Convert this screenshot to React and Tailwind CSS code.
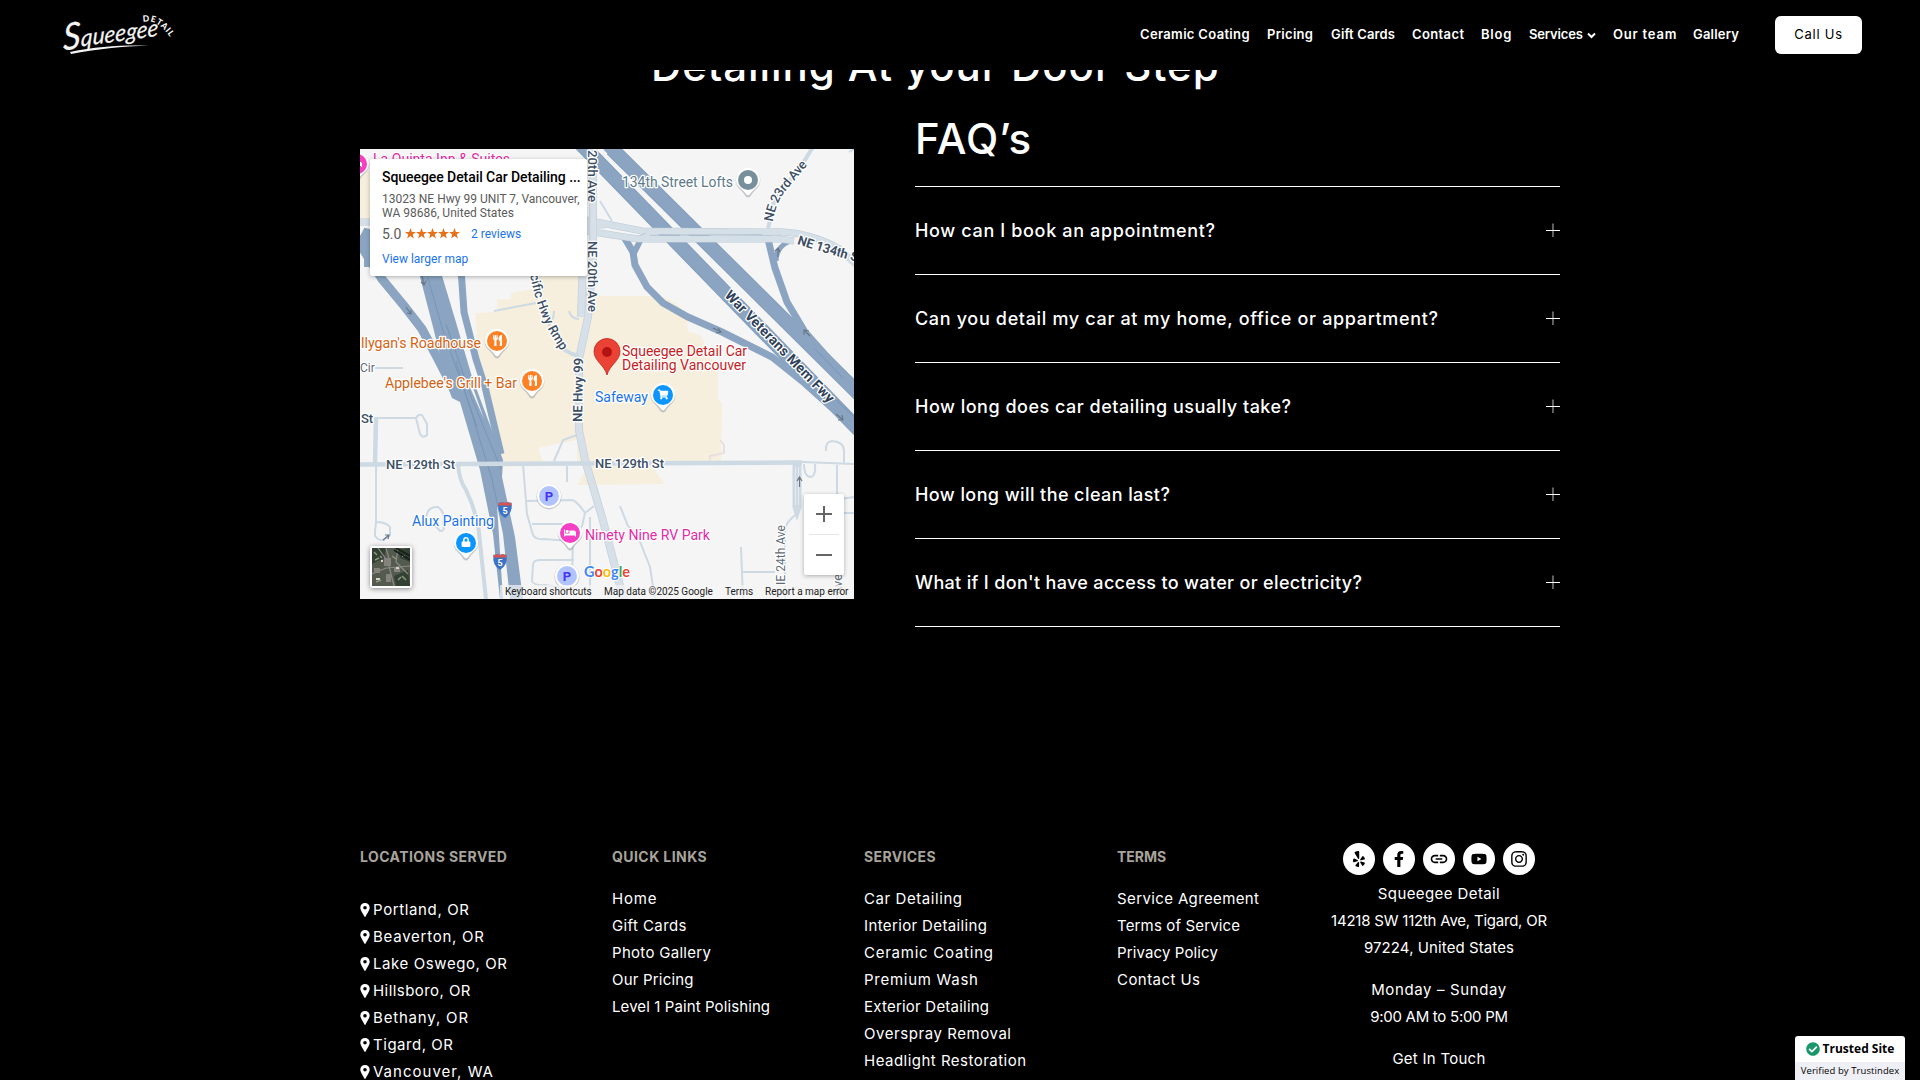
import { FaCheckCircle, FaFacebookF, FaInstagram, FaShoppingCart, FaUtensils, FaYelp, FaYoutube, FaBed, FaLock } from "react-icons/fa";
import { MdLink } from "react-icons/md";

const NAV = [
  { label: "Ceramic Coating", cls: "w-[110px] tracking-[0.33px]" },
  { label: "Pricing", cls: "w-[47px] tracking-[0.31px]" },
  { label: "Gift Cards", cls: "w-[64px] tracking-[0.14px]" },
  { label: "Contact", cls: "w-[52px] tracking-[0.38px]" },
  { label: "Blog", cls: "w-[31px] tracking-[0.8px]" },
  { label: "Services", cls: "w-[67px] tracking-[-0.14px]", menu: true },
  { label: "Our team", cls: "w-[63px] tracking-[0.8px]" },
  { label: "Gallery", cls: "w-[46px] tracking-[0.21px]" },
];

const FAQS = [
  { text: "How can I book an appointment?", cls: "tracking-[0.65px]" },
  { text: "Can you detail my car at my home, office or appartment?", cls: "tracking-[0.66px]" },
  { text: "How long does car detailing usually take?", cls: "tracking-[0.5px]" },
  { text: "How long will the clean last?", cls: "tracking-[0.42px]" },
  { text: "What if I don't have access to water or electricity?", cls: "tracking-[0.335px]" },
];

const LOCATIONS = [
  { text: "Portland, OR", cls: "tracking-[0.63px]" },
  { text: "Beaverton, OR", cls: "tracking-[0.75px]" },
  { text: "Lake Oswego, OR", cls: "tracking-[0.59px]" },
  { text: "Hillsboro, OR", cls: "tracking-[0.44px]" },
  { text: "Bethany, OR", cls: "tracking-[0.82px]" },
  { text: "Tigard, OR", cls: "tracking-[0.53px]" },
  { text: "Vancouver, WA", cls: "tracking-[1.02px]" },
];

const LINKS = [
  { text: "Home", cls: "tracking-[0.82px]" },
  { text: "Gift Cards", cls: "tracking-[0.4px]" },
  { text: "Photo Gallery", cls: "tracking-[0.3px]" },
  { text: "Our Pricing", cls: "tracking-[0.19px]" },
  { text: "Level 1 Paint Polishing", cls: "tracking-[0.1px]" },
];

const SERVICES = [
  { text: "Car Detailing", cls: "tracking-[0.57px]" },
  { text: "Interior Detailing", cls: "tracking-[0.37px]" },
  { text: "Ceramic Coating", cls: "tracking-[0.75px]" },
  { text: "Premium Wash", cls: "tracking-[0.73px]" },
  { text: "Exterior Detailing", cls: "tracking-[0.22px]" },
  { text: "Overspray Removal", cls: "tracking-[0.56px]" },
  { text: "Headlight Restoration", cls: "tracking-[0.48px]" },
];

const TERMS = [
  { text: "Service Agreement", cls: "tracking-[0.38px]" },
  { text: "Terms of Service", cls: "tracking-[0.15px]" },
  { text: "Privacy Policy", cls: "tracking-[0.13px]" },
  { text: "Contact Us", cls: "tracking-[0.44px]" },
];

const SOCIALS = [
  { name: "Yelp", Icon: FaYelp, size: 16 },
  { name: "Facebook", Icon: FaFacebookF, size: 16 },
  { name: "Website", Icon: MdLink, size: 20 },
  { name: "YouTube", Icon: FaYoutube, size: 16 },
  { name: "Instagram", Icon: FaInstagram, size: 18 },
];

function Logo() {
  return (
    <svg width="124" height="56" viewBox="0 0 124 56" className="ml-[56px]" aria-label="Squeegee Detail">
      <defs>
        <path id="logo-arc" d="M87 15 Q102 11 115 32" />
      </defs>
      <g fill="#f4f4f4" stroke="#f4f4f4" strokeWidth=".2" fontFamily="Lato" fontStyle="italic" transform="translate(7 43.500) rotate(-8)">
        <text x="0" y="0" fontSize="37" textLength="18" lengthAdjust="spacingAndGlyphs" transform="skewX(-8)">S</text>
        <text x="18" y="-1.500" fontSize="23" textLength="78" lengthAdjust="spacingAndGlyphs" transform="skewX(-10)">queegee</text>
      </g>
      <path d="M14 45 C40 39 66 38 93 38.500 C66 39.500 40 42 15 47 Z" fill="#f4f4f4" />
      <text fontFamily="Lato" fontWeight="900" fontSize="8.500" fill="#f4f4f4">
        <textPath href="#logo-arc" textLength="33">DETAIL</textPath>
      </text>
    </svg>
  );
}

function Header() {
  return (
    <header className="relative z-10 flex h-[70px] items-start bg-black">
      <div className="pt-[7px]"><Logo /></div>
      <nav className="mt-[25px] ml-[960px] flex h-[20px] items-center gap-[17px] text-[13px] font-semibold whitespace-nowrap">
        {NAV.map(({ label, cls, menu }) => (
          <a key={label} className={`flex items-center ${cls}`}>
            {label}
            {menu && (
              <svg width="9" height="7" viewBox="0 0 9 7" fill="none" stroke="currentColor" strokeWidth="2" className="ml-[4px]">
                <path d="M1 1.500 L4.500 5 L8 1.500" />
              </svg>
            )}
          </a>
        ))}
      </nav>
      <a className="mt-[16px] ml-[36px] flex h-[38px] w-[87px] items-center justify-center rounded-[6px] bg-white text-[13px] tracking-[0.78px] text-black">
        Call Us
      </a>
    </header>
  );
}

function Pin({ x, y, color, children }) {
  return (
    <g transform={`translate(${x} ${y})`}>
      <path d="M-12.300 0.500 A12.300 12.300 0 1 1 12.300 0.500 C12 7 6 9 2.500 15.500 Q0 18 -2.500 15.500 C-6 9 -12 7 -12.300 0.500Z" fill="#8a8f96" opacity=".45" transform="translate(0 .8)" />
      <path d="M-12 0 A12 12 0 1 1 12 0 C12 7 6 8 2 14 Q0 16.500 -2 14 C-6 8 -12 7 -12 0Z" fill="#fff" />
      <circle r="10" fill={color} />
      {children}
    </g>
  );
}

function Parking({ x, y }) {
  return (
    <g transform={`translate(${x} ${y})`}>
      <circle r="12.500" cy=".7" fill="#8a8f96" opacity=".45" />
      <circle r="12" fill="#fff" />
      <circle r="10" fill="#b1c4ff" />
      <text y="4.700" textAnchor="middle" fontSize="13" fontWeight="700" fill="#4733f0">P</text>
    </g>
  );
}

function Shield({ x, y }) {
  return (
    <g transform={`translate(${x} ${y})`}>
      <path d="M-6.500 -7 Q-3 -8.500 0 -7.300 Q3 -8.500 6.500 -7 Q8 3 0 8 Q-8 3 -6.500 -7Z" fill="#3b73c8" />
      <path d="M-6.500 -7.500 L-5 -6.500 L-3 -8 L0 -7 L3 -8 L5 -6.500 L6.500 -7.500 L6.500 -4.500 L-6.500 -4.500Z" fill="#d9544d" />
      <text y="4.300" textAnchor="middle" fontSize="9" fontWeight="700" fill="#fff">5</text>
    </g>
  );
}

function Label({ x, y, len, fill, rotate = 0, size = 14, weight = 400, children }) {
  return (
    <text
      transform={`translate(${x} ${y}) rotate(${rotate})`}
      textLength={len}
      lengthAdjust="spacingAndGlyphs"
      fontSize={size}
      fontWeight={weight}
      fill={fill}
      stroke="#fff"
      strokeWidth="2.500"
      strokeLinejoin="round"
      paintOrder="stroke"
    >
      {children}
    </text>
  );
}

function PathLabel({ id, len, size = 13, weight = 500, fill = "#3c4f66", children }) {
  return (
    <text fontSize={size} fontWeight={weight} fill={fill} stroke="#fff" strokeWidth="2.500" strokeLinejoin="round" paintOrder="stroke">
      <textPath href={`#${id}`} textLength={len}>{children}</textPath>
    </text>
  );
}

function StreetMap() {
  return (
    <svg width="494" height="450" viewBox="0 0 494 450" fontFamily="Roboto" className="block bg-[#f5f5f5]">
      <defs>
        <path id="war-vets" d="M364 147 L474 260" />
        <path id="ne-23rd" d="M413 73 Q415 58 423 45 L449 14" />
        <path id="ne-134th" d="M437 95 Q468 105 515 118" />
        <path id="pacific" d="M170 126 C176 153 182 175 203 204" />
      </defs>

      <path d="M0 22 L10 22 V72 L0 72Z M115 164 L137 163 V150 H151 V144 L172 140 V126 H226 V147 L297 147 Q311 150 319 157 L327 166 L328 183 Q340 183 344 192 L345 203 L358 216 V251 L362 254 L361 312 L143 318 L118 205Z M217 336 L228 317 H292 L305 335Z" fill="#f6efde" />
      <path d="M178 299 L217 291 V312 L183 313Z" fill="#f5f5f5" />

      <g fill="none" stroke="#cdd9e3" strokeWidth="2">
        <path d="M15 269 H56 M56 269 L60 285 Q63 290 67 286 L67 275 L62 266 Q58 265 56 269" />
        <path d="M16 315 V374 L15 382 L15 387 Q19 392 24 391 L30 386 L30 378 Q26 373 16 373" />
        <path d="M66 370 Q67 357 78 358 Q86 364 83 374 Q86 382 80 382 L74 375" />
        <path d="M163 315 L167 365 L173 386 Q176 391 184 390 L209 392 L222 377 L225 364 Q217 352 212 351 L167 352 M172 375 H218 M225 364 L234 357 M207 317 V333 M194 312 L203 291 L217 286 M213 388 L212 430 M172 432 L173 416 Q173 411 180 411 H214 M172 432 Q174 437 185 436 L210 440 M230 368 V450" />
        <path d="M260 357 L268 377 L277 385 L290 418 L295 450 M381 398 L383 450 M383 423 H415" />
        <path d="M442 313 L494 315 M466 302 Q465 293 472 292 Q484 293 484 302 V315 M444 315 Q444 328 451 328 Q456 327 455 315 M477 316 V450 M480 350 L494 348 M480 364 H494" />
        <path d="M438 364 Q425 373 425 382 V450" />
        <path d="M134 162 L176 154 M194 162 Q194 172 188 177 M209 162 Q211 170 219 170 M15 219 H43 M240 52 L252 72 M489 3 L494 0" />
        <path d="M350 311 L350 307 L364 304 V296 L360 291" stroke="#e7dfe0" />
      </g>
      <path d="M16 268 L15 315" stroke="#cdd9e3" strokeWidth="4.500" />
      <path d="M98 315 Q99 331 106 341 L112 355 L118 375 L126 450" fill="none" stroke="#cdd9e3" strokeWidth="4" />
      <path d="M435 314 L435 358 L437 364 L439 358 L439 314" fill="none" stroke="#cdd9e3" strokeWidth="5" />
      <path d="M435.500 318 V356 M438.500 318 V356" stroke="#e4eaf0" strokeWidth="1" />

      <path d="M58 120 L80 120 L95 170 L112 228 L143 311 L142 328 L155 388 L163 450 L140 450 L133 385 L120 321 L100 253 L92 249 L88 238 L73 178Z" fill="#8aa4c1" />
      <g fill="none" stroke="#8aa4c1">
        <path d="M-3 88 L3 100 L22 130 L45 158 L62 180 L77 208 L96 245" strokeWidth="9" />
        <path d="M0 94 L7 80 V118" strokeWidth="6" />
        <path d="M101 120 L104 163 L116 210 L125 238 L141 305" strokeWidth="7" />
      </g>
      <path d="M137 356 L143 450 H150 L143 385Z M109 236 L112 236 L124 270Z" fill="#f5f5f5" />
      <g fill="none" stroke="#6f8fb3" strokeWidth=".7">
        <path d="M66 122 L83 182 L106 246 L132 330 L138 358" />
        <path d="M86 175 L112 250 L141 320 M96 212 L105 243 L117 278" />
      </g>

      <path d="M252 0 L500 246" fill="none" stroke="#7d9abb" strokeWidth="14.500" />
      <path d="M218 -8 L500 282" fill="none" stroke="#7d9abb" strokeWidth="14.500" />
      <path d="M248 -4 L500 246" fill="none" stroke="#8aa4c1" strokeWidth="13" />
      <path d="M218 -8 L500 282" fill="none" stroke="#8aa4c1" strokeWidth="13" />
      <g fill="none" stroke="#8aa4c1" strokeWidth="7">
        <path d="M264 88 L273 103 L275 116 L287 138 L303 154 L328 168 L362 183 L412 208 L442 232 L500 284" />
        <path d="M280 92 L273 106" strokeWidth="6" />
        <path d="M408 90 L415 119 L427 153 L445 183 L485 228" />
        <path d="M430 92 Q416 98 416 112" strokeWidth="5" />
      </g>
      <path d="M457 233 L494 268 M455 200 L482 228" stroke="#6f8fb3" strokeWidth=".7" />

      <g fill="none" stroke="#bccad7" strokeWidth="7">
        <path d="M0 73 H12 M226 76 H245 M226 71 L282 82 L408 83 Q445 81 478 99 L498 117 M226 82 L278 90 H420 L434 92" />
      </g>
      <g fill="none" stroke="#d5dfe7" strokeWidth="6">
        <path d="M0 73 H12 M226 76 H245 M226 71 L282 82 L408 83 Q445 81 478 99 L498 117 M226 82 L278 90 H420 L434 92" />
      </g>
      <path d="M290 86.500 L402 85.500 M279 87 L286 84" stroke="#b3c2d0" strokeWidth=".8" />
      <g fill="none" stroke="#c5d2dd" strokeWidth="8">
        <path d="M233 -2 V110 L228 168 L219 210 V281 L225 311 L242 368 L264 452" />
        <path d="M223 110 L221 168" />
      </g>
      <g fill="none" stroke="#d7e0e8" strokeWidth="6.500">
        <path d="M233 -2 V110 L228 168 L219 210 V281 L225 311 L242 368 L264 452" />
        <path d="M223 110 L221 168" />
      </g>
      <path d="M0 315.500 L222 314.500 L442 313.500" fill="none" stroke="#cdd9e3" strokeWidth="4.500" />
      <path d="M453 -2 L443 14 L414 52 L408 80" fill="none" stroke="#cdd9e3" strokeWidth="4" />
      <path d="M203 200 L212 205 L219 207" fill="none" stroke="#cdd9e3" strokeWidth="4" />

      <g fill="none" stroke="#68788a" strokeWidth="1.200">
        <path d="M62 127 L64 136 M61 133 L64 136 L66 132 M46 158 L51 165 M47 164 L51 165 L51 161" />
        <path d="M353 179 L361 183 M356 184 L361 183 L358 179 M418 108 V99 M415 102 L418 99 L420 103 M450 187 L444 181 M444 186 L444 181 L449 182 M476 265 L483 271 M478 271 L483 271 L482 266" />
        <path d="M439.500 338 V328 M437 332 L439.500 328 L442 332 M23 391 L29 386 M25 386 L29 386 L28 390" />
      </g>

      <Label x={13} y={14.500} len={137} fill="#e52ba8">La Quinta Inn &amp; Suites</Label>
      <Label x={262} y={38} len={111} fill="#5d7987">134th Street Lofts</Label>
      <Label x={1} y={199} len={120} fill="#d56213">llygan's Roadhouse</Label>
      <Label x={25} y={239} len={132} fill="#d56213">Applebee's Grill + Bar</Label>
      <Label x={52} y={377} len={82} fill="#1a73e8">Alux Painting</Label>
      <Label x={225} y={391} len={125} fill="#e52ba8">Ninety Nine RV Park</Label>
      <Label x={235} y={253} len={53} fill="#1a73e8">Safeway</Label>
      <Label x={262} y={207} len={125} fill="#c5221f">Squeegee Detail Car</Label>
      <Label x={262} y={221} len={124} fill="#c5221f">Detailing Vancouver</Label>
      <Label x={26} y={320} len={69} weight={500} size={13} fill="#3c4f66">NE 129th St</Label>
      <Label x={235} y={319} len={69} weight={500} size={13} fill="#3c4f66">NE 129th St</Label>
      <Label x={1} y={274} size={13} weight={500} fill="#3c4f66">St</Label>
      <Label x={0} y={223} size={12} fill="#5f6b78">Cir</Label>
      <Label x={228} y={92} len={71} rotate={90} weight={500} size={13} fill="#3c4f66">NE 20th Ave</Label>
      <Label x={228} y={1} len={52} rotate={90} weight={500} size={13} fill="#3c4f66">20th Ave</Label>
      <Label x={222} y={273} len={64} rotate={-89} weight={600} size={13} fill="#3c4f66">NE Hwy 99</Label>
      <Label x={425} y={436} len={60} rotate={-90} size={12.5} fill="#5f6b78">IE 24th Ave</Label>
      <Label x={482} y={446} len={21} rotate={-90} size={12} fill="#5f6b78">Ave</Label>
      <PathLabel id="war-vets" len={150} size={14} weight={700} fill="#2f4058">War Veterans Mem Fwy</PathLabel>
      <PathLabel id="ne-23rd" len={68}>NE 23rd Ave</PathLabel>
      <PathLabel id="ne-134th" len={67} weight={700}>NE 134th St</PathLabel>
      <PathLabel id="pacific" len={83}>cific Hwy Rmp</PathLabel>

      <Shield x={145} y={361} />
      <Shield x={140} y={413} />
      <Parking x={189} y={347} />
      <Parking x={207} y={427} />
      <Pin x={-3} y={15} color="#f53fc4"><FaBed x="-5" y="-5" size={10} color="#fff" /></Pin>
      <Pin x={137} y={192} color="#ff8126"><FaUtensils x="-5" y="-6" size={11} color="#fff" /></Pin>
      <Pin x={172} y={232} color="#ff8126"><FaUtensils x="-5" y="-6" size={11} color="#fff" /></Pin>
      <Pin x={303} y={246} color="#0b95ff"><FaShoppingCart x="-5.500" y="-6" size={11} color="#fff" /></Pin>
      <Pin x={106} y={394} color="#0b95ff"><FaLock x="-5" y="-6" size={10} color="#fff" /></Pin>
      <Pin x={210} y={384} color="#f53fc4"><FaBed x="-6" y="-6" size={12} color="#fff" /></Pin>
      <Pin x={388} y={31} color="#78909c"><circle r="4" fill="#fff" /></Pin>
      <path d="M247 226 C244.500 216 234 212 234 202.500 A13 13 0 1 1 260 202.500 C260 212 249.500 216 247 226Z" fill="#ea4335" stroke="#c5221f" strokeWidth=".8" />
      <circle cx="247" cy="203" r="5" fill="#b31412" />

      <text x="224" y="428" fontSize="16" fontFamily="Lato" fontWeight="700" textLength="46" lengthAdjust="spacingAndGlyphs" stroke="#fff" strokeWidth="2" paintOrder="stroke">
        <tspan fill="#4285f4">G</tspan><tspan fill="#ea4335">o</tspan><tspan fill="#fbbc05">o</tspan><tspan fill="#4285f4">g</tspan><tspan fill="#34a853">l</tspan><tspan fill="#ea4335">e</tspan>
      </text>
    </svg>
  );
}

function SatelliteThumb() {
  return (
    <svg width="38" height="38" viewBox="0 0 38 38" className="bg-[#555a4f]">
      <path d="M0 0 H14 L12 10 L0 16Z M26 2 L38 0 V14 L28 10Z M22 28 L36 22 L38 38 H24Z" fill="#334034" />
      <path d="M6 0 L16 14 L22 38 M14 0 L18 14 M0 26 L14 20 L38 18 M26 0 L24 14 L36 26" fill="none" stroke="#8b8c86" strokeWidth="1.200" />
      <path d="M12 10 h7 v8 h-7z M22 20 h6 v4 h-6z M2 20 h6 v5 h-6z M14 26 h5 v8 h-5z" fill="#85847c" />
      <path d="M24 19 h3 v2 h-3z M4 30 h4 v2 h-4z M30 7 h3 v2 h-3z M9 12 h2 v2 h-2z" fill="#d6d3c9" />
      <path d="M22 2 L38 12 M24 0 L38 8" stroke="#17211b" strokeWidth="2" />
      <path d="M2 4 l3 3 M8 8 l2 2 M3 12 l4 -2 M30 28 l4 4 M26 32 l3 -3 M4 34 l5 -2 M20 8 l4 3" stroke="#8b9a7e" strokeWidth="1.500" />
    </svg>
  );
}

function MapPanel() {
  return (
    <section className="relative mt-[36px] h-[450px] w-[494px] shrink-0 overflow-hidden font-[Roboto]">
      <StreetMap />
      <div className="absolute top-[10px] left-[10px] h-[117px] w-[217px] rounded-[2px] bg-white pt-[9px] pl-[12px] whitespace-nowrap shadow-[0_1px_4px_rgba(0,0,0,0.3)]">
        <div className="text-[14px] leading-[18px] font-medium tracking-[-0.06px] text-black">Squeegee Detail Car Detailing ...</div>
        <div className="mt-[6px] text-[12px] leading-[14px] tracking-[0.01px] text-[#5b5b5b]">
          13023 NE Hwy 99 UNIT 7, Vancouver,<br />WA 98686, United States
        </div>
        <div className="mt-[6px] flex h-[16px] items-center leading-[16px]">
          <span className="w-[23px] text-[14px] text-[#5b5b5b]">5.0</span>
          <svg width="56" height="11" viewBox="0 0 56 11" fill="#e7711b" className="-mt-[2px]">
            {[0, 11, 22, 33, 44].map((x) => (
              <path key={x} transform={`translate(${x} 0)`} d="M5.500 0 L6.900 3.900 L11 4 L7.700 6.500 L8.900 10.500 L5.500 8.100 L2.100 10.500 L3.300 6.500 L0 4 L4.100 3.900Z" />
            ))}
          </svg>
          <span className="ml-[10px] text-[12px] text-[#1a73e8]">2 reviews</span>
        </div>
        <div className="mt-[10px] text-[12px] leading-[14px] text-[#1a73e8]">View larger map</div>
      </div>
      <div className="absolute top-[345px] left-[444px] flex h-[81px] w-[40px] flex-col items-center rounded-[2px] bg-white shadow-[0_1px_4px_rgba(0,0,0,0.3)]">
        <svg width="40" height="40" viewBox="0 0 40 40" stroke="#666" strokeWidth="2"><path d="M12 20 H28 M20 12 V28" /></svg>
        <div className="h-px w-[30px] bg-[#e6e6e6]" />
        <svg width="40" height="40" viewBox="0 0 40 40" stroke="#666" strokeWidth="2"><path d="M12 20 H28" /></svg>
      </div>
      <div className="absolute top-[397px] left-[10px] rounded-[3px] border-2 border-white shadow-[0_1px_5px_rgba(0,0,0,0.45)]">
        <SatelliteThumb />
      </div>
      <div className="absolute right-0 bottom-0 flex h-[14px] w-[354px] items-center bg-[#f5f5f5]/70 text-[10px] leading-[14px] whitespace-nowrap text-[#222]">
        <span className="ml-[5px] w-[99px]">Keyboard shortcuts</span>
        <span className="w-[121px]">Map data ©2025 Google</span>
        <span className="w-[40px]">Terms</span>
        <span>Report a map error</span>
      </div>
    </section>
  );
}

function PlusIcon() {
  return (
    <svg width="14" height="14" viewBox="0 0 14 14" stroke="#fff" strokeWidth="1" className="-mt-[2px]">
      <path d="M0 7.500 H14" />
      <path d="M7 0.500 V14" opacity=".75" />
    </svg>
  );
}

function Faqs() {
  return (
    <section className="w-[645px]">
      <h2 className="h-[73px] pt-px text-[42px] leading-[50px] font-medium tracking-[0.85px]">FAQ’s</h2>
      <div className="border-t border-white">
        {FAQS.map(({ text, cls }) => (
          <div key={text} className="flex h-[88px] items-center justify-between border-b border-white text-[18px] font-medium">
            <span className={cls}>{text}</span>
            <PlusIcon />
          </div>
        ))}
      </div>
    </section>
  );
}

function LocationPin() {
  return (
    <svg width="10" height="14" viewBox="0 0 10 14" fill="currentColor" className="mr-[3px]">
      <path fillRule="evenodd" d="M5 0 C7.700 0 9.700 2 9.700 4.700 C9.700 7.300 6.500 11 5.600 13.600 Q5 14.400 4.400 13.600 C3.500 11 0.300 7.300 0.300 4.700 C0.300 2 2.300 0 5 0Z M5 3 A1.800 1.800 0 1 0 5 6.600 A1.800 1.800 0 1 0 5 3Z" />
    </svg>
  );
}

function Column({ title, titleClass, width, items }) {
  return (
    <div className={width}>
      <h3 className={`mb-[15px] text-[14px] leading-[27px] font-bold text-[#a8a49c] ${titleClass}`}>{title}</h3>
      {items.map(({ text, cls }) => (
        <a key={text} className={`block ${cls}`}>{text}</a>
      ))}
    </div>
  );
}

function Footer() {
  return (
    <footer className="mt-[216px] flex text-[15px] leading-[27px] whitespace-nowrap">
      <div className="w-[252px]">
        <h3 className="mb-[26px] text-[14px] leading-[27px] font-bold tracking-[0.43px] text-[#a8a49c]">LOCATIONS SERVED</h3>
        {LOCATIONS.map(({ text, cls }) => (
          <a key={text} className={`flex items-center ${cls}`}>
            <LocationPin />
            {text}
          </a>
        ))}
      </div>
      <Column title="QUICK LINKS" titleClass="tracking-[0.43px]" width="w-[252px]" items={LINKS} />
      <Column title="SERVICES" titleClass="tracking-[0.38px]" width="w-[253px]" items={SERVICES} />
      <Column title="TERMS" titleClass="tracking-[-0.05px]" width="w-[202px]" items={TERMS} />
      <div className="w-[240px] text-center">
        <div className="mb-[5px] flex justify-center gap-[8px]">
          {SOCIALS.map(({ name, Icon, size }) => (
            <a key={name} aria-label={name} className="flex size-[32px] items-center justify-center rounded-full bg-white text-black">
              <Icon size={size} />
            </a>
          ))}
        </div>
        <p className="tracking-[0.4px]">Squeegee Detail</p>
        <p className="tracking-[-0.22px]">14218 SW 112th Ave, Tigard, OR</p>
        <p className="mb-[15px] tracking-[0.09px]">97224, United States</p>
        <p className="tracking-[0.62px]">Monday – Sunday</p>
        <p className="mb-[15px] tracking-[-0.27px]">9:00 AM to 5:00 PM</p>
        <p className="tracking-[0.27px]">Get In Touch</p>
      </div>
    </footer>
  );
}

function TrustBadge() {
  return (
    <div className="absolute right-[15px] bottom-0 z-20 h-[44px] w-[110px] overflow-hidden rounded-t-[3px] bg-white font-['Open_Sans'] whitespace-nowrap text-black">
      <div className="flex h-[26px] items-center justify-center gap-[3px] text-[12px] font-bold">
        <FaCheckCircle size={14} color="#1a976a" />
        Trusted Site
      </div>
      <div className="flex h-[18px] items-center justify-center bg-[#efeff6] text-[9.5px] tracking-[0.08px]">Verified by Trustindex</div>
    </div>
  );
}

export default function App() {
  return (
    <div className="relative h-[1080px] w-[1920px] overflow-hidden bg-black font-['Inter',sans-serif] text-white">
      <Header />
      <main className="ml-[360px] w-[1200px]">
        <h2 className="-mt-[29px] ml-[291px] h-[50px] text-[42px] leading-[50px] font-medium tracking-[0.93px] whitespace-nowrap">
          Detailing At your Door Step
        </h2>
        <div className="mt-[22px] flex gap-[61px]">
          <MapPanel />
          <Faqs />
        </div>
        <Footer />
      </main>
      <TrustBadge />
    </div>
  );
}
